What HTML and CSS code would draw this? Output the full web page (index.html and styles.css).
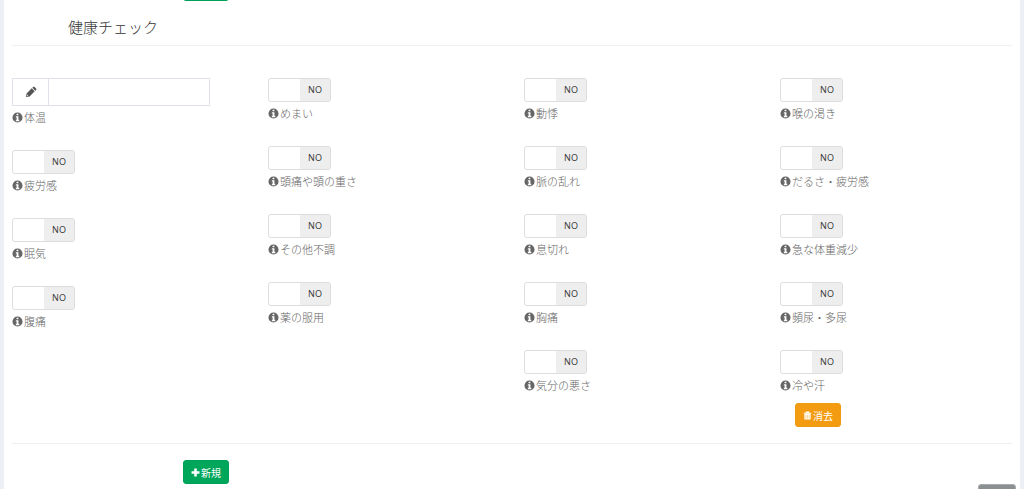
FILE: index.html
```html
<!DOCTYPE html>
<html lang="ja">
<head>
    <meta charset="UTF-8">
    <meta name="viewport" content="width=device-width, initial-scale=1.0">
    <title>健康チェック</title>
    <link rel="stylesheet" href="styles.css">
</head>
<body>
    <svg class="sprite" aria-hidden="true">
        <symbol id="icon-info" viewBox="0 0 12 12">
            <path fill-rule="evenodd" d="M6 0.5a5.5 5.5 0 1 0 0 11a5.5 5.5 0 1 0 0-11zM5 1.8h2v1.7H5zM4.2 4.5H7v3.9h0.9V10H4.2V8.4h0.9V6.1H4.2z"></path>
        </symbol>
        <symbol id="icon-pencil" viewBox="0 0 12 12">
            <path fill-rule="evenodd" d="M1 11l0.6-3.6L6.7 2.3l3 3-5.1 5.1zM2.3 8.6L2 9.9l1.4-0.3zM7.3 1.7l0.8-0.8q0.7-0.6 1.4 0l1.6 1.6q0.6 0.7 0 1.4l-0.8 0.8z"></path>
        </symbol>
        <symbol id="icon-trash" viewBox="0 0 12 12">
            <path fill-rule="evenodd" d="M4 0.8h4l0.7 1.5H11v1.4H1V2.3h2.3zM1.8 4h8.4v6.2q0 1.2-1.2 1.2H3q-1.2 0-1.2-1.2zM3.6 5.4v4.6h0.6v-4.6zM5.7 5.4v4.6h0.6v-4.6zM7.8 5.4v4.6h0.6v-4.6z"></path>
        </symbol>
        <symbol id="icon-plus" viewBox="0 0 12 12">
            <path d="M4.3 0.7h3.4v3.6h3.6v3.4H7.7v3.6H4.3V7.7H0.7V4.3h3.6z"></path>
        </symbol>
    </svg>

    <main class="panel">
        <div class="previous-section">
            <button type="button" class="btn btn-success" aria-label="新規"></button>
        </div>

        <h2 class="section-title">健康チェック</h2>

        <form class="check-form">
            <div class="check-grid">
                <div class="check-column">
                    <div class="form-item">
                        <div class="input-group">
                            <span class="input-addon"><svg class="icon"><use href="#icon-pencil"></use></svg></span>
                            <input type="text" class="form-input" id="temperature">
                        </div>
                        <label class="help" for="temperature"><svg class="icon"><use href="#icon-info"></use></svg>体温</label>
                    </div>
                    <div class="form-item">
                        <div class="switch"><input type="checkbox" id="fatigue"><span class="switch-text">NO</span></div>
                        <label class="help" for="fatigue"><svg class="icon"><use href="#icon-info"></use></svg>疲労感</label>
                    </div>
                    <div class="form-item">
                        <div class="switch"><input type="checkbox" id="sleepy"><span class="switch-text">NO</span></div>
                        <label class="help" for="sleepy"><svg class="icon"><use href="#icon-info"></use></svg>眠気</label>
                    </div>
                    <div class="form-item">
                        <div class="switch"><input type="checkbox" id="stomach"><span class="switch-text">NO</span></div>
                        <label class="help" for="stomach"><svg class="icon"><use href="#icon-info"></use></svg>腹痛</label>
                    </div>
                </div>

                <div class="check-column">
                    <div class="form-item">
                        <div class="switch"><input type="checkbox" id="dizzy"><span class="switch-text">NO</span></div>
                        <label class="help" for="dizzy"><svg class="icon"><use href="#icon-info"></use></svg>めまい</label>
                    </div>
                    <div class="form-item">
                        <div class="switch"><input type="checkbox" id="headache"><span class="switch-text">NO</span></div>
                        <label class="help" for="headache"><svg class="icon"><use href="#icon-info"></use></svg>頭痛や頭の重さ</label>
                    </div>
                    <div class="form-item">
                        <div class="switch"><input type="checkbox" id="other"><span class="switch-text">NO</span></div>
                        <label class="help" for="other"><svg class="icon"><use href="#icon-info"></use></svg>その他不調</label>
                    </div>
                    <div class="form-item">
                        <div class="switch"><input type="checkbox" id="medicine"><span class="switch-text">NO</span></div>
                        <label class="help" for="medicine"><svg class="icon"><use href="#icon-info"></use></svg>薬の服用</label>
                    </div>
                </div>

                <div class="check-column">
                    <div class="form-item">
                        <div class="switch"><input type="checkbox" id="palpitation"><span class="switch-text">NO</span></div>
                        <label class="help" for="palpitation"><svg class="icon"><use href="#icon-info"></use></svg>動悸</label>
                    </div>
                    <div class="form-item">
                        <div class="switch"><input type="checkbox" id="pulse"><span class="switch-text">NO</span></div>
                        <label class="help" for="pulse"><svg class="icon"><use href="#icon-info"></use></svg>脈の乱れ</label>
                    </div>
                    <div class="form-item">
                        <div class="switch"><input type="checkbox" id="breath"><span class="switch-text">NO</span></div>
                        <label class="help" for="breath"><svg class="icon"><use href="#icon-info"></use></svg>息切れ</label>
                    </div>
                    <div class="form-item">
                        <div class="switch"><input type="checkbox" id="chest"><span class="switch-text">NO</span></div>
                        <label class="help" for="chest"><svg class="icon"><use href="#icon-info"></use></svg>胸痛</label>
                    </div>
                    <div class="form-item">
                        <div class="switch"><input type="checkbox" id="sick"><span class="switch-text">NO</span></div>
                        <label class="help" for="sick"><svg class="icon"><use href="#icon-info"></use></svg>気分の悪さ</label>
                    </div>
                </div>

                <div class="check-column">
                    <div class="form-item">
                        <div class="switch"><input type="checkbox" id="thirst"><span class="switch-text">NO</span></div>
                        <label class="help" for="thirst"><svg class="icon"><use href="#icon-info"></use></svg>喉の渇き</label>
                    </div>
                    <div class="form-item">
                        <div class="switch"><input type="checkbox" id="dull"><span class="switch-text">NO</span></div>
                        <label class="help" for="dull"><svg class="icon"><use href="#icon-info"></use></svg>だるさ・疲労感</label>
                    </div>
                    <div class="form-item">
                        <div class="switch"><input type="checkbox" id="weight"><span class="switch-text">NO</span></div>
                        <label class="help" for="weight"><svg class="icon"><use href="#icon-info"></use></svg>急な体重減少</label>
                    </div>
                    <div class="form-item">
                        <div class="switch"><input type="checkbox" id="urine"><span class="switch-text">NO</span></div>
                        <label class="help" for="urine"><svg class="icon"><use href="#icon-info"></use></svg>頻尿・多尿</label>
                    </div>
                    <div class="form-item">
                        <div class="switch"><input type="checkbox" id="sweat"><span class="switch-text">NO</span></div>
                        <label class="help" for="sweat"><svg class="icon"><use href="#icon-info"></use></svg>冷や汗</label>
                        <div class="remove-row">
                            <button type="button" class="btn btn-warning"><svg class="icon"><use href="#icon-trash"></use></svg>消去</button>
                        </div>
                    </div>
                </div>
            </div>

            <div class="form-footer">
                <button type="button" class="btn btn-success"><svg class="icon"><use href="#icon-plus"></use></svg>新規</button>
            </div>
        </form>
    </main>

    <button type="button" class="page-top" aria-label="ページの先頭へ"></button>
</body>
</html>
```
FILE: styles.css
```css
* {
    margin: 0;
    padding: 0;
    box-sizing: border-box;
}

body {
    font-family: 'Open Sans', 'Noto Sans CJK JP', sans-serif;
    font-size: 12px;
    background: #ecf0f5;
    color: #333;
    padding: 0 4px;
}

.sprite {
    display: none;
}

.icon {
    width: 12px;
    height: 12px;
    fill: currentColor;
    flex: none;
}

.panel {
    background: #fff;
    padding: 0 8px;
    min-height: 100vh;
}

/* only the lower edge of the previous section's button shows */
.previous-section {
    height: 1px;
    padding-left: 171px;
    display: flex;
    align-items: flex-end;
    overflow: hidden;
}

.section-title {
    height: 45px;
    padding: 15px 0 0 56px;
    border-bottom: 1px solid #f1f1f1;
    font-size: 15px;
    font-weight: 300;
    line-height: 22px;
}

.check-grid {
    display: grid;
    grid-template-columns: repeat(4, 1fr);
    column-gap: 24px;
    padding: 32px 0 16px;
}

.check-column {
    display: flex;
    flex-direction: column;
    gap: 22px;
}

.input-group {
    display: flex;
    width: 198px;
    height: 28px;
    border: 1px solid #dfe2ea;
}

.input-addon {
    width: 36px;
    border-right: 1px solid #dfe2ea;
    display: flex;
    align-items: center;
    justify-content: center;
    color: #555;
}

.form-input {
    flex: 1;
    min-width: 0;
    padding: 0 8px;
    border: none;
    background: #fff;
    font: inherit;
}

.switch {
    display: grid;
    width: 63px;
    height: 24px;
}

.switch input,
.switch-text {
    grid-area: 1 / 1;
}

.switch input {
    appearance: none;
    border: 1px solid #ddd;
    border-radius: 3px;
    background: linear-gradient(to right, #fff 50%, #eee 50%);
    cursor: pointer;
}

.switch-text {
    justify-self: end;
    width: 32px;
    font-size: 9px;
    line-height: 24px;
    text-align: center;
    pointer-events: none;
}

.help {
    display: flex;
    align-items: center;
    gap: 1px;
    height: 22px;
    color: #666;
    font-size: 11px;
    font-weight: 300;
}

.help .icon {
    width: 11px;
    height: 11px;
}

.btn {
    display: inline-flex;
    align-items: center;
    justify-content: center;
    gap: 1px;
    width: 46px;
    height: 24px;
    flex: none;
    border: 1px solid transparent;
    border-radius: 3px;
    color: #fff;
    font-family: inherit;
    font-size: 10px;
    cursor: pointer;
}

.btn .icon {
    width: 9px;
    height: 9px;
}

.btn-success {
    background: #00a65a;
    border-color: #00a05a;
}

.btn-warning {
    background: #f39c12;
    border-color: #f09a12;
}

.remove-row {
    display: flex;
    padding: 7px 0 0 15px;
}

.form-footer {
    border-top: 1px solid #f1f1f1;
    padding: 16px 0 4px 171px;
    display: flex;
}

.page-top {
    position: fixed;
    right: 8px;
    bottom: -19px;
    width: 38px;
    height: 24px;
    border: 1px solid #aaa;
    border-radius: 3px;
    background: #8a9091;
    cursor: pointer;
}
```
